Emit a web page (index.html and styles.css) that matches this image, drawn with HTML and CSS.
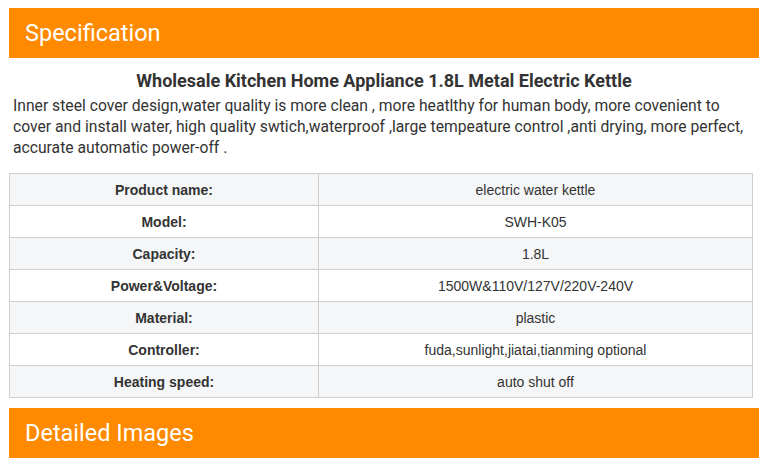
FILE: index.html
```html
<!DOCTYPE html>
<html>
<head>
<meta charset="utf-8">
<link rel="stylesheet" href="styles.css">
</head>
<body>
<div class="page">
  <div class="banner"><h2>Specification</h2></div>
  <h3 class="title">Wholesale Kitchen Home Appliance 1.8L Metal Electric Kettle</h3>
  <p class="desc">Inner steel cover design,water quality is more clean , more heatlthy for human body, more covenient to cover and install water, high quality swtich,waterproof ,large tempeature control ,anti drying, more perfect, accurate automatic power-off .</p>
  <table class="spec">
    <tr><th>Product name:</th><td>electric water kettle</td></tr>
    <tr><th>Model:</th><td>SWH-K05</td></tr>
    <tr><th>Capacity:</th><td>1.8L</td></tr>
    <tr><th>Power&amp;Voltage:</th><td>1500W&amp;110V/127V/220V-240V</td></tr>
    <tr><th>Material:</th><td>plastic</td></tr>
    <tr><th>Controller:</th><td>fuda,sunlight,jiatai,tianming optional</td></tr>
    <tr><th>Heating speed:</th><td>auto shut off</td></tr>
  </table>
  <div class="banner"><h2>Detailed Images</h2></div>
</div>
</body>
</html>
```
FILE: styles.css
```css
* { box-sizing: border-box; }
body {
  margin: 0;
  background: #fff;
  font-family: Roboto, "Liberation Sans", sans-serif;
  color: #333;
}
.page {
  width: 750px;
  margin: 8px 0 0 9px;
}
.banner {
  background: #ff8a00;
  height: 50px;
  display: flex;
  align-items: center;
  padding-left: 16px;
}
.banner h2 {
  margin: 0;
  font-weight: 400;
  font-size: 23.5px;
  color: #fff;
}
.title {
  margin: 12px 0 0;
  text-align: center;
  font-size: 18px;
  font-weight: 700;
  line-height: 22px;
  color: #333;
}
.desc {
  margin: 3px 0 0;
  padding-left: 4px;
  font-size: 15.7px;
  line-height: 21px;
  color: #333;
}
.spec {
  margin-top: 15px;
  width: 744px;
  border-collapse: collapse;
  font-family: "Liberation Sans", Arial, sans-serif;
  font-size: 14px;
  color: #333;
  margin-bottom: 10px;
}
.spec th, .spec td {
  border: 1px solid #cfcfcf;
  height: 32px;
  padding: 0;
  text-align: center;
  vertical-align: middle;
}
.spec th {
  width: 309px;
  font-weight: 700;
}
.spec td { font-weight: 400; }
.spec tr:nth-child(odd) { background: #f5f6f8; }
```
